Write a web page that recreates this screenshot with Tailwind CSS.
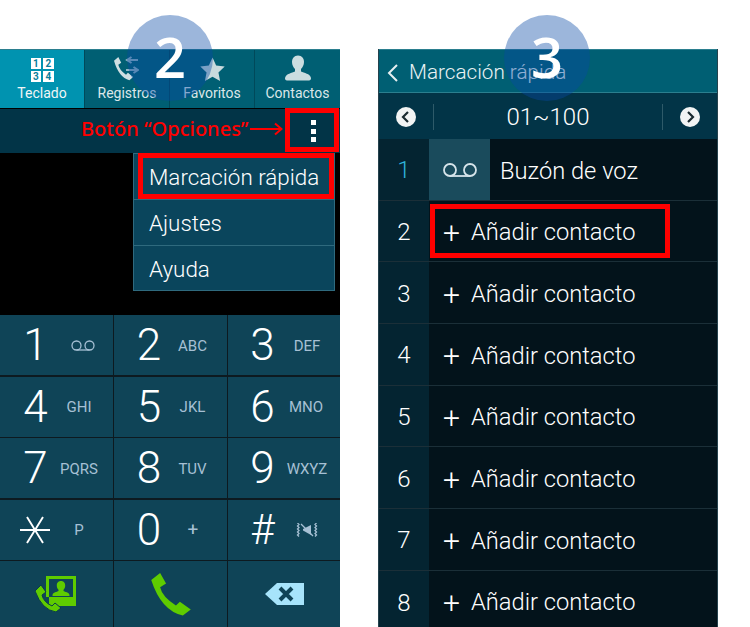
<!DOCTYPE html>
<html><head><meta charset="utf-8"><script src="https://cdn.jsdelivr.net/npm/@tailwindcss/browser@4"></script></head>
<body class="bg-white">
<div class="relative w-[750px] h-[627px] overflow-hidden bg-white font-['Roboto',sans-serif] font-light text-white flex items-start pt-[49px]">

<!-- LEFT PHONE -->
<section class="w-[340px] h-[578px] bg-black flex flex-col shrink-0">
  <nav class="h-[59px] grid grid-cols-[85px_85px_85px_85px] bg-[#005f73] border-t border-[#2b7f8f]">
    <div class="bg-[#0093b0] flex flex-col items-center pt-[8px] border-r border-[#00495a]">
      <div class="grid grid-cols-2 gap-[2px] w-[23px] h-[23px] text-[#0b7f9b] text-[10px] leading-[11px] font-bold text-center">
        <span class="bg-white">1</span><span class="bg-white">2</span><span class="bg-white">3</span><span class="bg-white">4</span>
      </div>
      <span class="text-[14px] leading-[16px] mt-[4px] font-normal text-[#f0f6f7]">Teclado</span>
    </div>
    <div class="flex flex-col items-center pt-[6px] border-r border-[#00495a] relative">
      <svg width="26" height="25" viewBox="0 0 26 25" class="ml-[-2px]"><g transform="translate(1 1) scale(.48 .54)"><path d="M0 7L9 0 15 10.500 9 14.500Q11 24 25 33L29 29 40 37 32 43Q10 38 0 7Z" fill="#cfdfe2"/></g><path d="M25 4H15M18.500 1L14 4l4.500 3M13 14h11M20.500 11l4.500 3-4.500 3" stroke="#8fb4c4" stroke-width="2" fill="none"/></svg>
      <span class="text-[14px] leading-[16px] mt-[4px] font-normal text-[#dbe7ea]">Registros</span>
    </div>
    <div class="flex flex-col items-center pt-[7px] border-r border-[#00495a]">
      <svg width="25" height="24" viewBox="0 0 24 23"><path d="M12 0.5l3.500 7.600 8.200 1-6 5.700 1.600 8.200L12 18.900l-7.300 4.100 1.600-8.200-6-5.700 8.200-1z" fill="#c9dadd"/></svg>
      <span class="text-[14px] leading-[16px] mt-[4px] font-normal text-[#dbe7ea]">Favoritos</span>
    </div>
    <div class="flex flex-col items-center pt-[5px]">
      <svg width="28" height="26" viewBox="0 0 28 26"><path d="M14 0.500c4 0 6 3 6 6.500 0 3-1.500 5.500-3 7v2.500c3 1.500 9 2 10 6.500 0 1.500-.5 2.500-2 2.500H3c-1.500 0-2-1-2-2.500 1-4.500 7-5 10-6.500V14c-1.500-1.500-3-4-3-7C8 3.500 10 .5 14 .5z" fill="#cbdde0"/></svg>
      <span class="text-[14px] leading-[16px] mt-[4px] font-normal text-[#dbe7ea]">Contactos</span>
    </div>
  </nav>
  <div class="mt-[1px] h-[44px] bg-[#023447] flex items-center justify-end pr-[24px]">
    <span class="flex flex-col gap-[3.500px]"><i class="block w-[5px] h-[5px] bg-white"></i><i class="block w-[5px] h-[5px] bg-white"></i><i class="block w-[5px] h-[5px] bg-white"></i></span>
  </div>
  <div class="h-[162px]"></div>
  <div class="flex-1 grid grid-cols-[113px_113px_112px] grid-rows-[60px_60px_60px_60px_1fr] gap-x-[1px] gap-y-[1.500px] bg-[#0d1a20]">
    <div class="bg-[#0f4457] grid grid-cols-[71px_18px] items-center"><span class="text-[44px] leading-none text-center">1</span><span class="flex justify-center pl-[5px] pt-[2px]"><svg width="26" height="12" viewBox="0 0 26 12" class="shrink-0" fill="none" stroke="#a6c0d4" stroke-width="1.300"><circle cx="6.500" cy="5.500" r="4.500"/><circle cx="19.500" cy="5.500" r="4.500"/><path d="M6.500 10h13"/></svg></span></div>
    <div class="bg-[#0f4457] grid grid-cols-[70px_17px] items-center"><span class="text-[44px] leading-none text-center">2</span><span class="flex justify-center pt-[2px] text-[15px] font-normal text-[#a6c0d4]">ABC</span></div>
    <div class="bg-[#0f4457] grid grid-cols-[69px_20px] items-center"><span class="text-[44px] leading-none text-center">3</span><span class="flex justify-center pt-[2px] text-[15px] font-normal text-[#a6c0d4]">DEF</span></div>
    <div class="bg-[#0f4457] grid grid-cols-[71px_16px] items-center"><span class="text-[44px] leading-none text-center">4</span><span class="flex justify-center pt-[2px] text-[15px] font-normal text-[#a6c0d4]">GHI</span></div>
    <div class="bg-[#0f4457] grid grid-cols-[70px_17px] items-center"><span class="text-[44px] leading-none text-center">5</span><span class="flex justify-center pt-[2px] text-[15px] font-normal text-[#a6c0d4]">JKL</span></div>
    <div class="bg-[#0f4457] grid grid-cols-[69px_18px] items-center"><span class="text-[44px] leading-none text-center">6</span><span class="flex justify-center pt-[2px] text-[15px] font-normal text-[#a6c0d4]">MNO</span></div>
    <div class="bg-[#0f4457] grid grid-cols-[71px_16px] items-center"><span class="text-[44px] leading-none text-center">7</span><span class="flex justify-center pt-[2px] text-[15px] font-normal text-[#a6c0d4]">PQRS</span></div>
    <div class="bg-[#0f4457] grid grid-cols-[70px_17px] items-center"><span class="text-[44px] leading-none text-center">8</span><span class="flex justify-center pt-[2px] text-[15px] font-normal text-[#a6c0d4]">TUV</span></div>
    <div class="bg-[#0f4457] grid grid-cols-[69px_20px] items-center"><span class="text-[44px] leading-none text-center">9</span><span class="flex justify-center pt-[2px] text-[15px] font-normal text-[#a6c0d4]">WXYZ</span></div>
    <div class="bg-[#0f4457] grid grid-cols-[70px_18px] items-center"><span class="flex justify-center"><svg width="30" height="30" viewBox="0 0 30 30" stroke="#fff" stroke-width="1.900"><path d="M0 15h30M7 2l16 26M23 2L7 28"/></svg></span><span class="flex justify-center pt-[2px] text-[15px] font-normal text-[#a6c0d4]">P</span></div>
    <div class="bg-[#0f4457] grid grid-cols-[70px_18px] items-center"><span class="text-[44px] leading-none text-center">0</span><span class="flex justify-center pt-[2px] text-[19px] font-normal text-[#a6c0d4]">+</span></div>
    <div class="bg-[#0f4457] grid grid-cols-[69px_20px] items-center"><span class="text-[42px] leading-none text-center">#</span><span class="flex justify-center pt-[1px]"><svg width="22" height="14" viewBox="0 0 22 14" class="shrink-0" fill="none" stroke="#a6c0d4" stroke-width="1.300"><path d="M1.500 0l1.500 1.500-1.500 1.500 1.500 1.500-1.500 1.500 1.500 1.500-1.500 1.500 1.500 1.500-1.500 1.500 1.500 1.500M20.500 0l-1.500 1.500 1.500 1.500-1.500 1.500 1.500 1.500-1.500 1.500 1.500 1.500-1.500 1.500 1.500 1.500-1.500 1.500M5 1l12 12"/><path d="M15 2v10L7 7.500V6z" fill="#a6c0d4" stroke="none"/></svg></span></div>
    <div class="bg-[#0f4457] flex items-center justify-center pr-[1px]">
      <svg width="42" height="36" viewBox="0 0 42 36"><path d="M11 0H41V30H14V21H11Z" fill="#5fcc00"/><path d="M14 3H38V21H14Z" fill="#0f4457"/><path d="M26 5c3 0 4.200 2.200 4.200 4.500 0 2-.8 3.500-1.700 4.300v1.200c1.500 1 5.500 1 6 4V20H17.500v-1c.5-3 4.500-3 6-4v-1.200c-.9-.8-1.700-2.300-1.700-4.300C21.800 7.200 23 5 26 5z" fill="#5fcc00"/><path d="M0 15L6 9l5 7-4 3Q8.500 26 17 30l3-3 6 5-5 4Q7 34 0 15Z" fill="#5fcc00" stroke="#0a3a4c" stroke-width="1"/></svg>
    </div>
    <div class="bg-[#0f4457] flex items-center justify-center"><svg width="40" height="43" viewBox="0 0 40 43.500"><path d="M0 7L9 0 15 10.500 9 14.500Q11 24 25 33L29 29 40 37 32 43Q10 38 0 7Z" fill="#5fcc00"/></svg></div>
    <div class="bg-[#0f4457] flex items-center justify-center"><svg width="41" height="24" viewBox="0 0 41 24"><path d="M13 1h27v22H13L1 12z" fill="#a7e4fb"/><path d="M16 6l12 12M28 6L16 18" stroke="#0f4457" stroke-width="4"/></svg></div>
  </div>
</section>

<!-- RIGHT PHONE -->
<section class="ml-[38px] w-[340px] h-[578px] bg-[#03131b] flex flex-col shrink-0 border-x border-[#25424d] overflow-hidden">
  <header class="h-[44px] shrink-0 bg-[#005f73] border-t border-[#2b7f8f] border-b border-b-[#2b7f8f] flex items-center pl-[8px] pt-[3px]">
    <svg width="12" height="18" viewBox="0 0 12 18" fill="none" stroke="#e6eff1" stroke-width="2"><path d="M10 1L2 9l8 8"/></svg>
    <span class="ml-[10px] text-[20.700px] text-[#eaf2f4] font-light">Marcación rápida</span>
  </header>
  <div class="h-[46px] shrink-0 bg-[#023447] flex items-center pt-[1px]">
    <div class="w-[54px] flex justify-center pr-[1px]"><svg width="20" height="20" viewBox="0 0 20 20"><circle cx="10" cy="10" r="10" fill="#f2f4f4"/><path d="M12 5l-5 5 5 5" fill="none" stroke="#1a2a30" stroke-width="2.200"/></svg></div>
    <i class="w-[1px] h-[26px] bg-[#2e5a69]"></i>
    <div class="flex-1 text-center text-[24px] font-light">01~100</div>
    <i class="w-[1px] h-[26px] bg-[#2e5a69]"></i>
    <div class="w-[54px] flex justify-center"><svg width="20" height="20" viewBox="0 0 20 20"><circle cx="10" cy="10" r="10" fill="#f2f4f4"/><path d="M8 5l5 5-5 5" fill="none" stroke="#1a2a30" stroke-width="2.200"/></svg></div>
  </div>
  <div class="h-[61.700px] shrink-0 flex border-b border-[#1b2f38]">
    <div class="w-[50px] bg-[#042431] pt-[2px] flex items-center justify-center text-[24px] text-[#2fb3d9] font-light">1</div>
    <div class="w-[61px] bg-[#1a4b5c] pt-[2px] flex items-center justify-center"><svg width="36" height="15" viewBox="0 0 36 15" fill="none" stroke="#d6e4ea" stroke-width="1.800"><circle cx="8" cy="7" r="6"/><circle cx="28" cy="7" r="6"/><path d="M8 13h20"/></svg></div>
    <div class="pl-[10px] pt-[4px] flex items-center text-[23.700px]">Buzón de voz</div>
  </div>
  <div class="h-[61.700px] shrink-0 flex border-b border-[#1b2f38]"><div class="w-[50px] bg-[#042431] pt-[2px] flex items-center justify-center text-[24px]">2</div><div class="flex items-center pl-[14px] pt-[4px] text-[23.700px]"><span class="mr-[11px] text-[30px] leading-none font-light">+</span>Añadir contacto</div></div>
  <div class="h-[61.700px] shrink-0 flex border-b border-[#1b2f38]"><div class="w-[50px] bg-[#042431] pt-[2px] flex items-center justify-center text-[24px]">3</div><div class="flex items-center pl-[14px] pt-[4px] text-[23.700px]"><span class="mr-[11px] text-[30px] leading-none font-light">+</span>Añadir contacto</div></div>
  <div class="h-[61.700px] shrink-0 flex border-b border-[#1b2f38]"><div class="w-[50px] bg-[#042431] pt-[2px] flex items-center justify-center text-[24px]">4</div><div class="flex items-center pl-[14px] pt-[4px] text-[23.700px]"><span class="mr-[11px] text-[30px] leading-none font-light">+</span>Añadir contacto</div></div>
  <div class="h-[61.700px] shrink-0 flex border-b border-[#1b2f38]"><div class="w-[50px] bg-[#042431] pt-[2px] flex items-center justify-center text-[24px]">5</div><div class="flex items-center pl-[14px] pt-[4px] text-[23.700px]"><span class="mr-[11px] text-[30px] leading-none font-light">+</span>Añadir contacto</div></div>
  <div class="h-[61.700px] shrink-0 flex border-b border-[#1b2f38]"><div class="w-[50px] bg-[#042431] pt-[2px] flex items-center justify-center text-[24px]">6</div><div class="flex items-center pl-[14px] pt-[4px] text-[23.700px]"><span class="mr-[11px] text-[30px] leading-none font-light">+</span>Añadir contacto</div></div>
  <div class="h-[61.700px] shrink-0 flex border-b border-[#1b2f38]"><div class="w-[50px] bg-[#042431] pt-[2px] flex items-center justify-center text-[24px]">7</div><div class="flex items-center pl-[14px] pt-[4px] text-[23.700px]"><span class="mr-[11px] text-[30px] leading-none font-light">+</span>Añadir contacto</div></div>
  <div class="h-[62px] shrink-0 flex"><div class="w-[50px] bg-[#042431] pt-[2px] flex items-center justify-center text-[24px]">8</div><div class="flex items-center pl-[14px] pt-[2px] text-[23.700px]"><span class="mr-[11px] text-[30px] leading-none font-light">+</span>Añadir contacto</div></div>
</section>

<!-- Overlay: dropdown menu on left phone -->
<div class="absolute left-[133px] top-[153px] w-[202px] h-[138px] bg-[#0a455c] border border-[#2f6a7e] flex flex-col text-[22.400px]">
  <div class="h-[46px] pl-[15px] pt-[3px] flex items-center border-b border-[#2f6a7e]">Marcación rápida</div>
  <div class="h-[46px] pl-[15px] pt-[3px] flex items-center border-b border-[#2f6a7e]">Ajustes</div>
  <div class="flex-1 pl-[15px] pt-[3px] flex items-center">Ayuda</div>
</div>

<!-- Annotations -->
<div class="absolute left-[138px] top-[153px] w-[196px] h-[46px] border-[5px] border-[#f00]"></div>
<div class="absolute left-[285px] top-[108px] w-[54px] h-[44px] border-[5px] border-[#f00]"></div>
<div class="absolute left-[430px] top-[204px] w-[240px] h-[54px] border-[5px] border-[#f00]"></div>
<div class="absolute left-[81px] top-[115px] flex items-center text-[#f00] text-[20px] leading-[28px] font-medium font-['Noto_Sans',sans-serif]">Botón “Opciones”<svg width="33" height="14" viewBox="0 0 33 14" fill="none" stroke="#f00" stroke-width="2" class="ml-[1px]"><path d="M0 7h31M25 1.500l6.500 5.500-6.500 5.500"/></svg></div>

<!-- Step numbers -->
<div class="absolute left-[127px] top-[15px] w-[86px] h-[86px] rounded-full bg-[#0848a6]/40 flex items-center justify-center pb-[4px] text-[56px] font-semibold font-['Open_Sans',sans-serif] leading-none">2</div>
<div class="absolute left-[504px] top-[15px] w-[86px] h-[86px] rounded-full bg-[#0848a6]/40 flex items-center justify-center pb-[4px] text-[56px] font-semibold font-['Open_Sans',sans-serif] leading-none">3</div>
</div>
</body></html>
